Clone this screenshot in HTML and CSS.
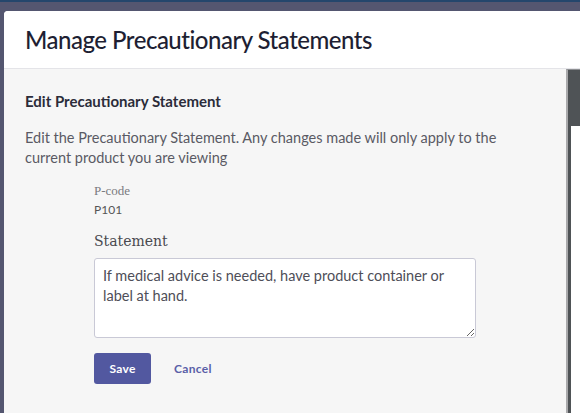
FILE: index.html
```html
<!DOCTYPE html>
<html lang="en">

<head>
  <meta charset="UTF-8">
  <meta name="viewport" content="width=device-width, initial-scale=1.0">
  <title>Manage Precautionary Statements</title>
  <link rel="stylesheet" href="styles.css">
</head>

<body>
  <div class="topbar"></div>
  <div class="modal">
    <div class="modal-header">
      <h1>Manage Precautionary Statements</h1>
    </div>
    <div class="modal-body">
      <div class="content">
        <h2>Edit Precautionary Statement</h2>
        <p class="intro">Edit the Precautionary Statement. Any changes made will only apply to the current product you are viewing</p>
        <div class="form">
          <div class="field-label">P-code</div>
          <div class="field-value">P101</div>
          <label class="statement-label" for="statement">Statement</label>
          <textarea id="statement" class="statement">If medical advice is needed, have product container or label at hand.</textarea>
          <div class="actions">
            <button class="btn">Save</button>
            <a class="link" href="#">Cancel</a>
          </div>
        </div>
      </div>
      <div class="side">
        <div class="side-inner"></div>
      </div>
    </div>
  </div>
</body>

</html>
```

FILE: styles.css
```css
html, body {
  height: 100%;
}
body {
  margin: 0;
  background-color: #545670;
  font-family: Lato, "Open Sans", sans-serif;
  overflow: hidden;
  display: flex;
  flex-direction: column;
}
.topbar {
  height: 2px;
  background-color: #24466c;
}
.modal {
  flex: 1;
  margin: 9px 0 0 4px;
  background-color: #f6f6f6;
  border-radius: 4px 0 0 0;
  display: flex;
  flex-direction: column;
  overflow: hidden;
}
.modal-header {
  background-color: #fff;
  height: 57px;
  border-bottom: 1px solid #e4e4e8;
  padding-left: 21px;
  display: flex;
  align-items: center;
}
h1 {
  margin: 0;
  font-size: 24px;
  font-weight: 500;
  color: #1e1f33;
  letter-spacing: -0.5px;
}
.modal-body {
  flex: 1;
  display: flex;
}
.content {
  flex: 1;
  padding: 23px 0 0 21px;
}
h2 {
  margin: 0;
  font-size: 15px;
  font-weight: bold;
  color: #2b2c3a;
}
.intro {
  margin: 18px 0 0;
  font-size: 14.5px;
  line-height: 20px;
  color: #5a5a64;
  width: 490px;
}
.form {
  margin: 15px 0 0 69px;
}
.field-label {
  font-family: "Liberation Serif", serif;
  font-size: 13px;
  color: #7a7a80;
}
.field-value {
  font-size: 12px;
  color: #555;
  margin-top: 3px;
}
.statement-label {
  display: block;
  margin-top: 16px;
  font-family: "DejaVu Serif", serif;
  font-size: 14px;
  color: #4a4a50;
}
.statement {
  display: block;
  box-sizing: border-box;
  margin-top: 9px;
  width: 382px;
  height: 80px;
  padding: 7px 8px;
  border: 1px solid #c9c9d6;
  border-radius: 3px;
  background-color: #fff;
  font-family: Lato, sans-serif;
  font-size: 14.5px;
  line-height: 20px;
  color: #4e4e58;
  resize: vertical;
}
.actions {
  display: flex;
  align-items: center;
  margin-top: 15px;
}
.btn {
  background-color: #5258a0;
  color: #fff;
  border: none;
  border-radius: 3px;
  width: 57px;
  height: 31px;
  font-family: Lato, sans-serif;
  font-weight: bold;
  font-size: 12px;
  letter-spacing: 0.3px;
  cursor: pointer;
}
.link {
  margin-left: 23px;
  color: #5a5fa8;
  font-weight: bold;
  font-size: 12px;
  letter-spacing: 0.3px;
  text-decoration: none;
}
.side {
  width: 12px;
  border-left: 2px solid #a9a9ab;
  border-top: 1px solid #8d8f92;
  background-color: #4f5356;
  padding-top: 56px;
}
.side-inner {
  height: 100%;
  margin-left: 3px;
  background-color: #fff;
}
```
